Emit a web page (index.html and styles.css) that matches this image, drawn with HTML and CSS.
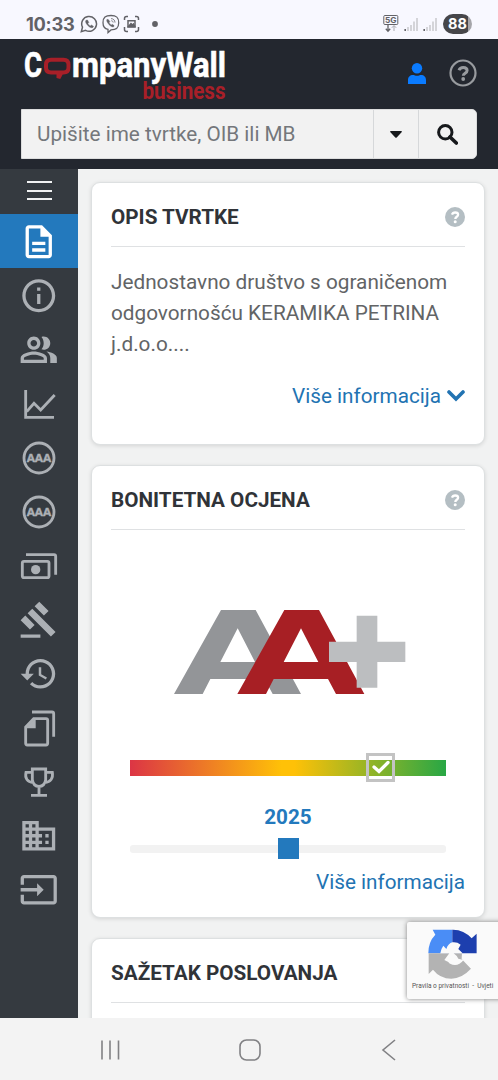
FILE: index.html
```html
<!DOCTYPE html>
<html lang="hr">
<head>
<meta charset="utf-8">
<title>CompanyWall business</title>
<link rel="stylesheet" href="styles.css">
</head>
<body>
<div class="status">
  <span class="clock">10:33</span>
  <svg class="status-apps" viewBox="0 0 80 20" width="80" height="20" fill="none" stroke="#626267" stroke-width="1.5">
    <path d="M1.3 17.7 2.5 13.2A7.4 7.4 0 1 1 5.6 16.4Z"/>
    <path d="M6 6.3c-.9.9-.5 2.8 1.8 5.2 2.2 2.2 4.200 2.800 5.300 1.700l.4-.9-2.200-1.300-1 .9c-1-.4-2-1.400-2.400-2.400l.9-1L7.500 6Z" fill="#626267" stroke-width=".4"/>
    <path d="M31 1.500c5.500 0 7.700 1.800 7.700 7.200s-2.200 7.200-7.700 7.200l-3 2.700v-3.200c-3.300-.7-5-2.700-5-6.700 0-5.400 2.500-7.200 8-7.200Z" stroke-width="1.300"/>
    <path d="M27 5.300c-.8 1 0 3 1.900 5.200 2 2.200 4.200 3 5 2l.2-.9-1.900-1.300-.9.7c-1-.5-1.900-1.500-2.200-2.500l.8-.8-1.400-2Z" fill="#626267" stroke-width=".4"/>
    <path d="M31 4.600c2.600.1 3.900 1.600 4 4M31.300 6.700c1.200.1 1.800.8 1.900 1.800" stroke-width=".8"/>
    <path d="M44.500 6V4.500a2 2 0 0 1 2-2H48M55 2.500h1.500a2 2 0 0 1 2 2V6M58.500 13v2.500a2 2 0 0 1-2 2H55M48 17.500h-1.500a2 2 0 0 1-2-2V13"/>
    <path d="M48 6.800h7v6.200h-7Z"/><path d="m48.500 12.500 2.500-3 1.500 1.500 1-1 1.300 2.500Z" fill="#626267"/>
    <circle cx="75" cy="10" r="2.900" fill="#626267" stroke="none"/>
  </svg>
  <svg class="signal" viewBox="0 0 56 20" width="56" height="20">
    <rect x=".8" y="1.500" width="14" height="9" rx="1" fill="none" stroke="#626267"/>
    <text x="2" y="9" class="five-g" textLength="11.500" lengthAdjust="spacingAndGlyphs">5G</text>
    <path d="M5 11v6M2.800 14.800 5 17.200l2.200-2.400" fill="none" stroke="#626267" stroke-width="1.300"/>
    <path d="M11 17v-5M8.800 13.800 11 11.500l2.200 2.300" fill="none" stroke="#aaaab0"/>
    <path d="M25 17v-4M28 17v-6M31 17V7.500M34 17V4M44 17v-4M47 17v-6M50 17V7.500M53 17V4" stroke="#c0c0c5" stroke-width="1.300"/>
    <path d="M22.200 17v-2M41.200 17v-2" stroke="#626267" stroke-width="1.600"/>
  </svg>
  <span class="battery">88</span>
</div>

<header class="header">
  <div class="brand-row">
    <svg class="brand" viewBox="0 0 210 60" width="210" height="60">
      <text class="brand-name" x="1" y="37.500" textLength="18" lengthAdjust="spacingAndGlyphs">C</text>
      <path d="M28 20.700h12.500q5 0 5 5v2.800q0 5-5 5H38.500L35.500 39v-5.500H28q-5 0-5-5v-2.800q0-5 5-5Z" fill="none" stroke="#a81f28" stroke-width="4"/>
      <text class="brand-name" x="49" y="37.500" textLength="154" lengthAdjust="spacingAndGlyphs">mpanyWall</text>
      <text class="brand-sub" x="119.500" y="59.500" textLength="83" lengthAdjust="spacingAndGlyphs">business</text>
    </svg>
    <svg class="user" viewBox="0 0 18 21" width="18" height="21" fill="#0a7bff"><circle cx="9" cy="5.300" r="5.200"/><path d="M0 21v-4c0-3 2-5 5-5 1.300 0 2.500.8 4 .8s2.700-.8 4-.8c3 0 5 2 5 5v4Z"/></svg>
    <svg class="help" viewBox="0 0 28 28" width="28" height="28" fill="none" stroke="#989b9f"><circle cx="14" cy="14" r="12.500" stroke-width="2.200"/><path d="M10 11.200c.7-1.800 2-2.700 4.200-2.700 2.300 0 3.900 1.300 3.900 3.100 0 2.700-3.800 2.700-3.800 5.200" stroke-width="3"/><circle cx="14.200" cy="20" r="1.900" fill="#989b9f" stroke="none"/></svg>
  </div>
  <div class="search">
    <div class="search-input">Upišite ime tvrtke, OIB ili MB</div>
    <div class="search-drop"><svg viewBox="0 0 12 7" width="12" height="7"><path d="M.7 0h10.600q1 .3.3 1.300L6.700 6.400q-.7.800-1.400 0L.4 1.300Q-.3.300.7 0Z" fill="#17191c"/></svg></div>
    <div class="search-go"><svg viewBox="0 0 21 21" width="21" height="21" fill="none" stroke="#17191c"><circle cx="8.300" cy="8.300" r="6.700" stroke-width="3"/><path d="m13 13 6.300 6" stroke-width="3.700" stroke-linecap="round"/></svg></div>
  </div>
</header>

<div class="body">
  <nav class="side">
    <div class="menu"><i></i><i></i><i></i></div>
    <a class="item active"><svg class="mi" viewBox="0 0 24 24"><path d="M8 16h8v2H8zm0-4h8v2H8zm6-10H6c-1.100 0-2 .9-2 2v16c0 1.100.89 2 1.990 2H18c1.100 0 2-.9 2-2V8l-6-6zm4 18H6V4h7v5h5v11z"/></svg></a>
    <a class="item"><svg class="mi" viewBox="0 0 24 24"><path d="M11 7h2v2h-2zm0 4h2v6h-2zm1-9C6.480 2 2 6.480 2 12s4.480 10 10 10 10-4.480 10-10S17.520 2 12 2zm0 18c-4.410 0-8-3.590-8-8s3.590-8 8-8 8 3.590 8 8-3.590 8-8 8z"/></svg></a>
    <a class="item"><svg class="mi" viewBox="0 0 24 24"><path d="M16.670 13.130C18.040 14.060 19 15.320 19 17v3h4v-3c0-2.180-3.570-3.470-6.330-3.870zM15 12c2.210 0 4-1.790 4-4s-1.790-4-4-4c-.47 0-.91.1-1.330.24C14.500 5.270 15 6.580 15 8s-.5 2.730-1.330 3.760c.42.14.86.24 1.330.24zM9 12c2.210 0 4-1.790 4-4s-1.790-4-4-4-4 1.790-4 4 1.790 4 4 4zm0-6c1.100 0 2 .9 2 2s-.9 2-2 2-2-.9-2-2 .9-2 2-2zM9 13c-2.670 0-8 1.340-8 4v3h16v-3c0-2.660-5.330-4-8-4zm6 5H3v-.99C3.200 16.290 6.300 15 9 15s5.800 1.290 6 2v1z"/></svg></a>
    <a class="item"><svg class="wide" viewBox="0 633 234 162"><path d="M77 672v82H162"/><path d="m80 737 22-25 20 20 42-45"/></svg></a>
    <a class="item"><svg class="wide" viewBox="0 0 234 162"><circle cx="117" cy="81" r="45"/><text class="aaa" x="80" y="92" textLength="74" lengthAdjust="spacingAndGlyphs">AAA</text></svg></a>
    <a class="item"><svg class="wide" viewBox="0 0 234 162"><circle cx="117" cy="81" r="45"/><text class="aaa" x="80" y="92" textLength="74" lengthAdjust="spacingAndGlyphs">AAA</text></svg></a>
    <a class="item"><svg class="wide" viewBox="0 324 234 162"><rect x="67" y="391" width="80" height="49" rx="5"/><circle class="solid" cx="107" cy="416" r="14"/><path d="M78 371h84q5 0 5 5v55"/></svg></a>
    <a class="item"><svg class="mi" viewBox="0 0 24 24"><path d="M1 21h12v2H1zM5.245 8.070l2.830-2.827 14.140 14.142-2.828 2.828zM12.317 1l5.657 5.656-2.830 2.830-5.654-5.660zM3.825 9.485l5.657 5.657-2.828 2.828-5.657-5.657z"/></svg></a>
    <a class="item"><svg class="mi" viewBox="0 0 24 24"><path d="M13 3c-4.970 0-9 4.030-9 9H1l3.890 3.890.07.14L9 12H6c0-3.870 3.130-7 7-7s7 3.130 7 7-3.130 7-7 7c-1.930 0-3.680-.79-4.940-2.060l-1.420 1.420C8.270 19.990 10.510 21 13 21c4.970 0 9-4.030 9-9s-4.030-9-9-9zm-1 5v5l4.280 2.540.72-1.210-3.500-2.080V8H12z"/></svg></a>
    <a class="item"><svg class="wide" viewBox="0 15 234 162"><path d="M96 48h60q5 0 5 5V122"/><path d="M101 68h37q5 0 5 5v69q0 5-5 5H82q-5 0-5-5V93Z"/><path class="solid" d="M76 97 107 66v31Z"/></svg></a>
    <a class="item"><svg class="wide" viewBox="0 177 234 162"><path d="M97 219h40v32q-3 20-20 20t-20-20ZM97 229H78c-4 18 4 29 22 31M137 229h20c3 18-5 29-23 31M117 271v24M93 298h48"/></svg></a>
    <a class="item"><svg class="mi" viewBox="0 0 24 24"><path d="M12 7V3H2v18h20V7H12zM6 19H4v-2h2v2zm0-4H4v-2h2v2zm0-4H4V9h2v2zm0-4H4V5h2v2zm4 12H8v-2h2v2zm0-4H8v-2h2v2zm0-4H8V9h2v2zm0-4H8V5h2v2zm10 12h-8v-2h2v-2h-2v-2h2v-2h-2V9h8v10zm-2-8h-2v2h2v-2zm0 4h-2v2h2v-2z"/></svg></a>
    <a class="item"><svg class="mi" viewBox="0 0 24 24"><path d="M21 3.010H3c-1.100 0-2 .9-2 2V9h2V4.990h18v14.030H3V15H1v4.010c0 1.100.9 1.980 2 1.980h18c1.100 0 2-.88 2-1.980v-14c0-1.110-.9-2-2-2zM11 16l4-4-4-4v3H1v2h10v3z"/></svg></a>
  </nav>

  <main class="main">
    <section class="card about">
      <div class="card-head"><h2>OPIS TVRTKE</h2><svg class="q" viewBox="0 0 20 20"><circle cx="10" cy="10" r="10" fill="#b4bec3"/><path d="M7 7.700c.5-1.500 1.500-2.200 3.200-2.200 1.700 0 2.900.9 2.900 2.300 0 2-2.800 2-2.800 4.100" fill="none" stroke="#fff" stroke-width="2.300"/><circle cx="10.200" cy="14.700" r="1.500" fill="#fff"/></svg></div>
      <p>Jednostavno društvo s ograničenom<br>odgovornošću KERAMIKA PETRINA<br>j.d.o.o....</p>
      <a class="more">Više informacija<svg viewBox="0 0 18 12" width="18" height="12"><path d="m2 2 7 7 7-7" fill="none" stroke="#2273b2" stroke-width="3.600" stroke-linecap="round"/></svg></a>
    </section>

    <section class="card rating">
      <div class="card-head"><h2>BONITETNA OCJENA</h2><svg class="q" viewBox="0 0 20 20"><circle cx="10" cy="10" r="10" fill="#b4bec3"/><path d="M7 7.700c.5-1.500 1.500-2.200 3.200-2.200 1.700 0 2.900.9 2.900 2.300 0 2-2.800 2-2.800 4.100" fill="none" stroke="#fff" stroke-width="2.300"/><circle cx="10.200" cy="14.700" r="1.500" fill="#fff"/></svg></div>
      <svg class="grade" role="img" aria-label="AA+" viewBox="43 60 696 254" width="232" height="84.700">
        <defs><path id="letter" fill-rule="evenodd" d="M43 312 184 60H288L424 312H339L315 267H152L129 312ZM182 216H286L234 115Z"/></defs>
        <use href="#letter" fill="#939598"/>
        <use href="#letter" x="190" fill="#a71f24"/>
        <path d="M591 77h62v78h84v61h-84v77h-62v-77h-83v-61h83Z" fill="#bcbec0"/>
      </svg>
      <div class="scale"><span class="mark"><svg viewBox="0 0 18 14" width="18" height="14"><path d="m2 7 5 4.500L16 2.500" fill="none" stroke="#fff" stroke-width="3.300"  stroke-linecap="round"/></svg></span></div>
      <div class="year">2025</div>
      <div class="slider"><span class="thumb"></span></div>
      <a class="more">Više informacija</a>
    </section>

    <section class="card summary">
      <div class="card-head"><h2>SAŽETAK POSLOVANJA</h2></div>
    </section>
  </main>
</div>

<div class="captcha">
  <svg viewBox="384 89 148 150" width="49.300" height="50">
    <path d="M398 91h59v71h-72q0-35 21-56Z" fill="#4a8df6"/>
    <path d="M457 91q34-1 58 26l15-14v59h-73Z" fill="#1d3fae"/>
    <path d="M386 224v-62h100l-1 17 28 29q-28 30-59 30-34 0-55-27Z" fill="#b3b3b3"/>
    <path d="M421 162q1-12 9-23l9 10q6-17 18-20 14-2 25 7l-7 13 13 13-27 0q10 7 14 16l16 4q-12 15-26 15-16-1-20-9l-12-6 15-20Z" fill="#fafafa"/>
  </svg>
  <span>Pravila o privatnosti&nbsp; - &nbsp;Uvjeti</span>
</div>

<footer class="softkeys">
  <svg viewBox="0 0 22 22" width="22" height="22"><path d="M3 1.500v19M11 1.500v19M19.500 1.500v19"/></svg>
  <svg viewBox="0 0 22 22" width="22" height="22"><rect x="1" y="1" width="20" height="20" rx="6.500"/></svg>
  <svg viewBox="0 0 22 22" width="22" height="22"><path d="M17 1 5 11l12 10"/></svg>
</footer>
</body>
</html>
```
FILE: styles.css
```css
* { box-sizing: border-box; }
body {
  position: relative;
  margin: 0;
  width: 498px;
  height: 1080px;
  overflow: hidden;
  display: flex;
  flex-direction: column;
  background: #f1f2f2;
  font-family: Roboto, "Liberation Sans", sans-serif;
  color: #5c5e61;
}
svg { display: block; flex: none; }

.status {
  flex: 0 0 39px;
  display: flex;
  align-items: center;
  background: #f8f8ff;
  padding: 9px 26px 0;
}
.clock { width: 54px; font: 700 18.300px/24px Inter, Roboto, sans-serif; color: #626267; letter-spacing: -.3px; }
.signal { margin-left: auto; margin-right: 4px; }
.five-g { font: 700 8px Inter, Roboto, sans-serif; fill: #626267; }
.battery {
  width: 29px;
  height: 20px;
  border-radius: 10px;
  background: linear-gradient(90deg, #46464a 86%, #a5a5aa 86%);
  color: #fff;
  font: 700 14.500px/20px Inter, Roboto, sans-serif;
  text-align: center;
}

.header { flex: 0 0 130px; background: #23272f; }
.brand-row { height: 70px; display: flex; align-items: flex-start; padding-left: 23px; }
.brand { overflow: visible; }
.brand-name { font: 700 35px Roboto, sans-serif; fill: #fff; stroke: #fff; stroke-width: .6; }
.brand-sub { font: 700 23px Roboto, sans-serif; fill: #a81f28; }
.user { margin: 24px 0 0 175px; }
.help { margin: 20px 0 0 23px; }
.search {
  display: flex;
  margin: 0 21px;
  height: 50px;
  background: #f2f2f2;
  border: 1px solid #dcdddd;
  border-radius: 0 5px 5px 0;
}
.search-input { flex: 1; padding-left: 15px; font-size: 20.700px; line-height: 49px; color: #74777b; }
.search-drop, .search-go { display: flex; align-items: center; justify-content: center; border-left: 1px solid #d6d8da; }
.search-drop { width: 45px; }
.search-go { width: 58px; }

.body { flex: 0 0 849px; display: flex; overflow: hidden; }
.side { width: 78px; background: #353a40; }
.menu { height: 45px; padding-top: 12px; display: flex; flex-direction: column; align-items: center; gap: 6.500px; }
.menu i { width: 25px; height: 2px; background: #f1f2f3; }
.item { height: 54px; padding-top: 1px; display: flex; align-items: center; justify-content: center; }
.active { background: #2379bd; }
.mi { width: 39.500px; height: 39.500px; fill: #acb0b5; }
.active .mi { fill: #fff; }
.wide { width: 78px; height: 54px; fill: none; stroke: #acb0b5; stroke-width: 8.500; }
.wide .solid { fill: #acb0b5; stroke: none; }
.wide .aaa { font: 700 30px "Open Sans", sans-serif; fill: #acb0b5; stroke: #acb0b5; stroke-width: 1; }

.main { flex: 1; padding: 13px 13px 0; display: flex; flex-direction: column; gap: 20px; }
.card {
  flex: none;
  padding: 0 19px;
  background: #fff;
  border: 1px solid #dde0e1;
  border-radius: 9px;
  box-shadow: 0 1px 4px rgba(0, 0, 0, .12);
}
.about { height: 263px; }
.rating { height: 453px; }
.summary { height: 200px; }
.card-head {
  height: 64px;
  padding-top: 4px;
  display: flex;
  align-items: center;
  justify-content: space-between;
  border-bottom: 1px solid #dfe1e3;
}
h2 { margin: 0; font-size: 20.700px; font-weight: 700; line-height: 24px; color: #303338; }
.q { width: 20px; height: 20px; }
p { margin: 20px 0 0; font-size: 20.750px; line-height: 31px; color: #626466; white-space: nowrap; }
.more { display: flex; justify-content: flex-end; align-items: center; gap: 6px; font-size: 20.700px; line-height: 24px; color: #2273b2; }
.about .more { margin-top: 24px; }
.grade { margin: 80px 0 0 63px; }
.scale {
  position: relative;
  height: 16px;
  margin: 65.300px 19px 0;
  background: linear-gradient(90deg, #dc3545, #ffc107 48%, #ffc107 52%, #28a745);
}
.mark {
  position: absolute;
  left: 236px;
  top: -7px;
  width: 29px;
  height: 29px;
  border: 3.500px solid #c3c3c3;
  display: flex;
  align-items: center;
  justify-content: center;
}
.year { margin-top: 29px; text-align: center; font-weight: 700; font-size: 20.700px; line-height: 24px; color: #2379bd; }
.slider { margin: 16px 19px 0; height: 8px; border-radius: 3px; background: #f2f2f2; display: flex; align-items: center; justify-content: center; }
.thumb { flex: none; width: 21px; height: 21px; background: #2379bd; }
.rating .more { margin-top: 17px; }

.captcha {
  position: absolute;
  left: 407px;
  top: 922px;
  width: 98px;
  height: 77px;
  padding-top: 7px;
  background: #fafafa;
  border-radius: 2px;
  box-shadow: 0 0 5px #808080;
  overflow: hidden;
}
.captcha svg { margin-left: 21px; }
.captcha span { display: block; margin: 3px 0 0 5px; font-size: 6.500px; line-height: 9px; white-space: nowrap; color: #555; }

.softkeys {
  flex: 1;
  display: flex;
  justify-content: space-between;
  align-items: center;
  padding: 1px 98px 0 99px;
  background: #f3f3f3;
}
.softkeys svg { fill: none; stroke: #818184; stroke-width: 1.600; }
```
